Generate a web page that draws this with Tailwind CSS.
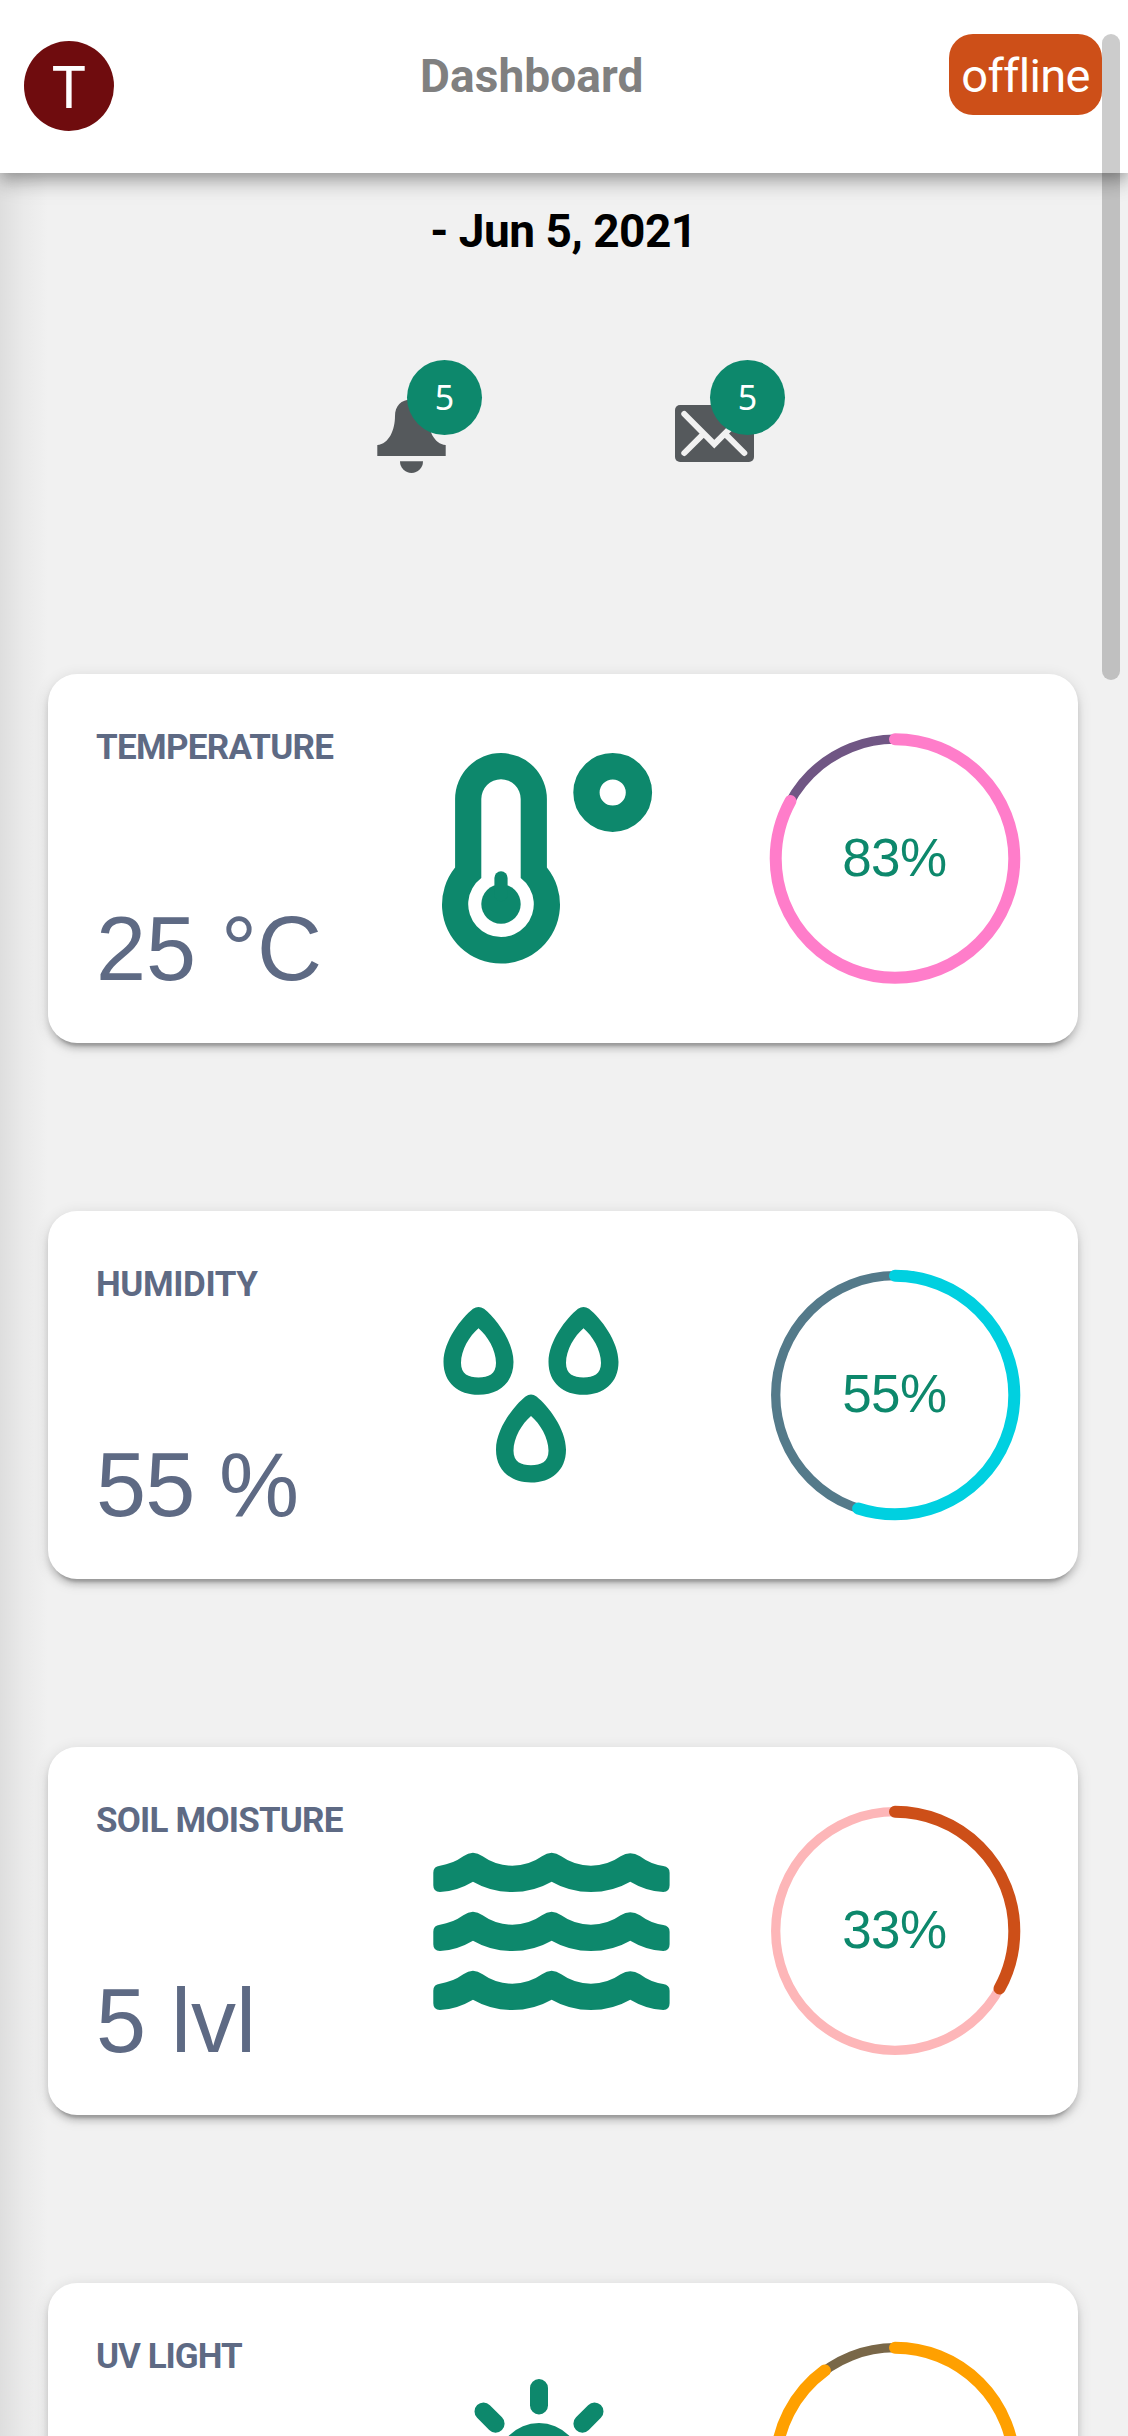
<!DOCTYPE html>
<html lang="en">
<head>
<meta charset="utf-8">
<title>Dashboard</title>
<script src="https://cdn.jsdelivr.net/npm/@tailwindcss/browser@4"></script>
</head>
<body class="relative h-[2436px] w-[1128px] overflow-hidden bg-[#f1f1f1] font-['Roboto',sans-serif]">
<!-- side drawer edge shadow -->
<div class="absolute inset-y-0 left-0 w-12 bg-linear-to-r from-[#dedede] via-[#eaeaea] to-[#f1f1f1]"></div>

<header class="relative flex h-[173px] items-start bg-white pr-[26px] pl-6 shadow-[0_6px_12px_-3px_rgba(0,0,0,0.2),0_12px_15px_0_rgba(0,0,0,0.14),0_3px_30px_0_rgba(0,0,0,0.12)]">
  <div class="mt-[41px] flex size-[90px] items-center justify-center rounded-full bg-[#6f0c0e] pb-0.5 font-['Noto_Sans',sans-serif] text-[59px] leading-none text-white">T</div>
  <h1 class="mt-[46px] ml-[306px] text-[46px] leading-[60px] font-bold tracking-[0.1px] text-[#808080]">Dashboard</h1>
  <div class="mt-[34px] ml-auto flex h-[81px] w-[153px] items-center justify-center rounded-3xl bg-[#cd4f18] pt-0.5 text-[47px] leading-none tracking-[-0.7px] text-white">offline</div>
</header>

<main class="relative h-[2263px] overflow-hidden pt-[28px]">
  <h2 class="h-[60px] pr-px text-center text-[46px] leading-[60px] font-bold tracking-[-0.5px] text-black">- Jun 5, 2021</h2>

  <div class="mt-[99px] flex h-[314.300px] gap-[193px] pl-[377px]">
    <div class="relative h-[120px] w-[105px]">
      <svg class="h-[120px] w-[105px]" viewBox="377 360 105 120" fill="#55595c">
        <path d="M377.3 445C389 444 395 430 395 416C395 406 401 399.500 411.500 399.500C422 399.500 428 406 428 416C428 430 434 444 445.700 445V456H377.300Z"/>
        <path d="M400 461.300H423A11.500 11.700 0 0 1 400 461.300Z"/>
      </svg>
      <span class="absolute top-0 left-[30px] flex size-[75px] items-center justify-center rounded-full bg-[#0d886c] font-['Noto_Sans',sans-serif] text-[34px] text-white">5</span>
    </div>
    <div class="relative h-[120px] w-[110px]">
      <svg class="h-[120px] w-[110px]" viewBox="675 360 110 120">
        <rect x="675" y="405" width="79" height="57" rx="5" fill="#55595c"/>
        <path d="M684.300 414L714.300 444.200L744.300 414M684.300 453L702.500 434.800M744.300 453L726.100 434.800" fill="none" stroke="#f1f1f1" stroke-width="6" stroke-linecap="round"/>
      </svg>
      <span class="absolute top-0 left-[35px] flex size-[75px] items-center justify-center rounded-full bg-[#0d886c] font-['Noto_Sans',sans-serif] text-[34px] text-white">5</span>
    </div>
  </div>

  <div class="flex flex-col gap-[168px] pr-[50px] pl-12">
    <section class="flex h-[368.300px] shrink-0 items-center rounded-[29px] bg-white pr-[57px] pl-12 shadow-[0_9px_3px_-6px_rgba(0,0,0,0.2),0_6px_6px_0_rgba(0,0,0,0.14),0_3px_15px_0_rgba(0,0,0,0.12)]">
      <div class="flex h-full w-[325px] flex-col whitespace-nowrap text-[#5e6a84]">
        <h3 class="mt-[53px] text-[35px] leading-[42px] font-bold tracking-[-0.7px]">TEMPERATURE</h3>
        <p class="mt-[130px] font-['Liberation_Sans',sans-serif] text-[90px] leading-[100px]">25 °C</p>
      </div>
      <svg class="h-[369px] w-[320px]" viewBox="421 0 320 369" fill="#0d886c">
        <path fill-rule="evenodd" d="M455.100 193.500V125A45.900 45.900 0 0 1 546.900 125V193.500A59 59 0 1 1 455.100 193.500ZM481.300 204V125A19.700 19.700 0 0 1 520.700 125V204A32.800 32.800 0 1 1 481.300 204Z"/>
        <circle cx="501" cy="230" r="19.700"/>
        <rect x="494.400" y="197.300" width="13.200" height="30" rx="6.600"/>
        <circle cx="612.700" cy="118.500" r="26.250" fill="none" stroke="#0d886c" stroke-width="26.300"/>
      </svg>
      <svg class="ml-auto size-[252px]" viewBox="0 0 252 252" fill="none">
        <circle cx="126" cy="126.500" r="119.300" stroke="#705684" stroke-width="9.300"/>
        <circle cx="126" cy="126.500" r="119.300" stroke="#ff7dca" stroke-width="12" stroke-linecap="round" pathLength="100" stroke-dasharray="83 100" transform="rotate(-90 126 126.500)"/>
        <text x="125.300" y="144" text-anchor="middle" class="fill-[#0d886c] font-['Liberation_Sans',sans-serif] text-[53px] tracking-[-0.6px]">83%</text>
      </svg>
    </section>

    <section class="flex h-[368.300px] shrink-0 items-center rounded-[29px] bg-white pr-[57px] pl-12 shadow-[0_9px_3px_-6px_rgba(0,0,0,0.2),0_6px_6px_0_rgba(0,0,0,0.14),0_3px_15px_0_rgba(0,0,0,0.12)]">
      <div class="flex h-full w-[325px] flex-col whitespace-nowrap text-[#5e6a84]">
        <h3 class="mt-[53px] text-[35px] leading-[42px] font-bold tracking-[-0.4px]">HUMIDITY</h3>
        <p class="mt-[129px] font-['Liberation_Sans',sans-serif] text-[90px] leading-[100px] tracking-[-0.7px]">55 %</p>
      </div>
      <svg class="h-[369px] w-[320px]" viewBox="421 0 320 369" fill="#0d886c">
        <defs>
          <path id="drop" fill-rule="evenodd" d="M-5.500 1.800Q0 -2 5.500 1.800C17 11 35 34 35 55C35 76 20 87.800 0 87.800C-20 87.800 -35 76 -35 55C-35 34 -17 11 -5.500 1.800ZM0 21.300C-9 29 -17.500 43 -17.500 56C-17.500 67 -10 70.500 0 70.500C10 70.500 17.500 67 17.500 56C17.500 43 9 29 0 21.300Z"/>
        </defs>
        <use href="#drop" x="478.500" y="97"/>
        <use href="#drop" x="583.500" y="97"/>
        <use href="#drop" x="531" y="184.700"/>
      </svg>
      <svg class="ml-auto size-[252px]" viewBox="0 0 252 252" fill="none">
        <circle cx="126" cy="126" r="119.300" stroke="#547a8a" stroke-width="9.300"/>
        <circle cx="126" cy="126" r="119.300" stroke="#00d0e0" stroke-width="12" stroke-linecap="round" pathLength="100" stroke-dasharray="55 100" transform="rotate(-90 126 126)"/>
        <text x="125.300" y="143" text-anchor="middle" class="fill-[#0d886c] font-['Liberation_Sans',sans-serif] text-[53px] tracking-[-0.6px]">55%</text>
      </svg>
    </section>

    <section class="flex h-[368.300px] shrink-0 items-center rounded-[29px] bg-white pr-[57px] pl-12 shadow-[0_9px_3px_-6px_rgba(0,0,0,0.2),0_6px_6px_0_rgba(0,0,0,0.14),0_3px_15px_0_rgba(0,0,0,0.12)]">
      <div class="flex h-full w-[325px] flex-col whitespace-nowrap text-[#5e6a84]">
        <h3 class="mt-[53px] text-[35px] leading-[42px] font-bold tracking-[-0.8px]">SOIL MOISTURE</h3>
        <p class="mt-[129px] font-['Liberation_Sans',sans-serif] text-[90px] leading-[100px]">5 lvl</p>
      </div>
      <svg class="h-[369px] w-[320px]" viewBox="421 0 320 369" fill="#0d886c">
        <defs>
          <path id="wave" transform="scale(.3333)" d="M0 60Q0 41 20 39Q58 34 90 11Q119 -10 148 11Q187 39 237 39Q287 39 326 11Q355 -10 384 11Q423 39 473 39Q523 39 562 11Q591 -8 620 11Q652 35 690 40Q709 43 709 60V98Q709 118 690 118Q640 116 591 87Q537 118 473 118Q409 118 355 87Q301 118 237 118Q173 118 119 87Q70 116 20 118Q0 118 0 98Z"/>
        </defs>
        <use href="#wave" x="433.300" y="105.700"/>
        <use href="#wave" x="433.300" y="164.700"/>
        <use href="#wave" x="433.300" y="223.700"/>
      </svg>
      <svg class="ml-auto size-[252px]" viewBox="0 0 252 252" fill="none">
        <circle cx="126" cy="126" r="119.300" stroke="#fdb6b8" stroke-width="9.300"/>
        <circle cx="126" cy="126" r="119.300" stroke="#cd4f18" stroke-width="12" stroke-linecap="round" pathLength="100" stroke-dasharray="33 100" transform="rotate(-90 126 126)"/>
        <text x="125.300" y="143" text-anchor="middle" class="fill-[#0d886c] font-['Liberation_Sans',sans-serif] text-[53px] tracking-[-0.6px]">33%</text>
      </svg>
    </section>

    <section class="flex h-[368.300px] shrink-0 items-center rounded-[29px] bg-white pr-[57px] pl-12 shadow-[0_9px_3px_-6px_rgba(0,0,0,0.2),0_6px_6px_0_rgba(0,0,0,0.14),0_3px_15px_0_rgba(0,0,0,0.12)]">
      <div class="flex h-full w-[325px] flex-col whitespace-nowrap text-[#5e6a84]">
        <h3 class="mt-[53px] text-[35px] leading-[42px] font-bold tracking-[-1px]">UV LIGHT</h3>
      </div>
      <svg class="h-[369px] w-[320px]" viewBox="421 0 320 369" fill="#0d886c">
        <circle cx="539" cy="182" r="42"/>
        <path d="M539 105V122.500M483.500 128.500L495.600 140.700M594.500 128.500L582.400 140.700" stroke="#0d886c" stroke-width="18" stroke-linecap="round"/>
      </svg>
      <svg class="ml-auto size-[252px]" viewBox="0 0 252 252" fill="none">
        <circle cx="126" cy="126" r="119.300" stroke="#796748" stroke-width="9.300"/>
        <circle cx="126" cy="126" r="119.300" stroke="#ffa000" stroke-width="12" stroke-linecap="round" pathLength="100" stroke-dasharray="90 100" transform="rotate(-90 126 126)"/>
      </svg>
    </section>
  </div>
</main>

<!-- overlay scrollbar thumb -->
<div class="absolute top-[34px] left-[1102px] h-[646px] w-[18px] rounded-full bg-black/20"></div>
</body>
</html>
